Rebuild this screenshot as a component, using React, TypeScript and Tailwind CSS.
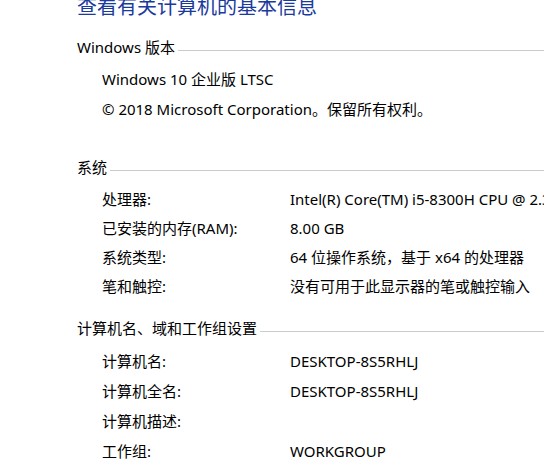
import React from "react";

const font = { fontFamily: '"Noto Sans", "Noto Sans CJK SC", sans-serif' };

function Header({ text, className = "" }: { text: string; className?: string }) {
  return (
    <div className={`flex h-[30px] items-center text-[15px] text-black ${className}`}>
      <span className="whitespace-nowrap">{text}</span>
      <div className="ml-[3px] mt-[7px] h-px flex-1 bg-[#cbcbcb]" />
    </div>
  );
}

function Row({ label, value, h = "h-[30px]" }: { label: string; value?: string; h?: string }) {
  return (
    <div className={`flex ${h} items-center pl-[25px] text-[15px] text-black`}>
      <div className="w-[188px] shrink-0 whitespace-nowrap">{label}</div>
      <div className="whitespace-nowrap">{value}</div>
    </div>
  );
}

export default function App() {
  return (
    <div
      className="h-[459px] w-[544px] overflow-hidden bg-white pl-[77px]"
      style={font}
    >
      <div className="-mt-[7px] flex h-[28px] items-center whitespace-nowrap text-[20px] text-[#1a3a9c]">
        查看有关计算机的基本信息
      </div>
      <Header text="Windows 版本" className="mt-[11px]" />
      <div className="mt-[2px] flex h-[30px] items-center pl-[25px] text-[15px] text-black whitespace-nowrap">
        Windows 10 企业版 LTSC
      </div>
      <div className="flex h-[30px] items-center pl-[25px] text-[15px] text-black whitespace-nowrap">
        © 2018 Microsoft Corporation。保留所有权利。
      </div>
      <Header text="系统" className="mt-[28px]" />
      <div className="mt-[3px]">
        <Row h="h-[29px]" label="处理器:" value="Intel(R) Core(TM) i5-8300H CPU @ 2.30GHz" />
        <Row h="h-[29px]" label="已安装的内存(RAM):" value="8.00 GB" />
        <Row h="h-[29px]" label="系统类型:" value="64 位操作系统，基于 x64 的处理器" />
        <Row h="h-[29px]" label="笔和触控:" value="没有可用于此显示器的笔或触控输入" />
      </div>
      <Header text="计算机名、域和工作组设置" className="mt-[12px]" />
      <div className="mt-[3px]">
        <Row label="计算机名:" value="DESKTOP-8S5RHLJ" />
        <Row label="计算机全名:" value="DESKTOP-8S5RHLJ" />
        <Row label="计算机描述:" />
        <Row label="工作组:" value="WORKGROUP" />
      </div>
    </div>
  );
}
